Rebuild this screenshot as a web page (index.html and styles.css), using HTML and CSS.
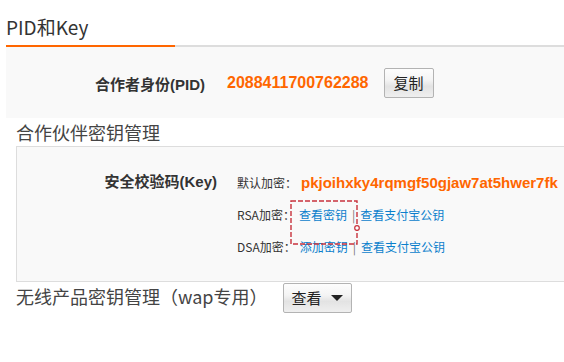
FILE: index.html
```html
<!DOCTYPE html>
<html lang="zh-CN">

<head>
    <meta charset="UTF-8">
    <meta name="viewport" content="width=device-width, initial-scale=1.0">
    <title>PID和Key</title>
    <link rel="stylesheet" href="styles.css">
</head>

<body>
    <div class="page">
        <div class="tabs">
            <div class="tab">PID和Key</div>
        </div>

        <div class="panel pid-panel">
            <span class="label">合作者身份(PID)</span>
            <span class="pid">2088411700762288</span>
            <button class="btn copy-btn">复制</button>
        </div>

        <div class="section">
            <h3 class="section-title">合作伙伴密钥管理</h3>
            <div class="panel key-panel">
                <div class="label">安全校验码(Key)</div>
                <div class="key-rows">
                    <div class="key-row">
                        <span class="type">默认加密：</span>
                        <span class="key">pkjoihxky4rqmgf50gjaw7at5hwer7fk</span>
                    </div>
                    <div class="key-row">
                        <span class="type">RSA加密：</span>
                        <a href="#">查看密钥</a><span class="sep">|</span><a href="#">查看支付宝公钥</a>
                    </div>
                    <div class="key-row">
                        <span class="type">DSA加密：</span>
                        <a href="#">添加密钥</a><span class="sep">|</span><a href="#">查看支付宝公钥</a>
                    </div>
                </div>
                <!-- 选中框 -->
                <svg class="marquee" width="70" height="46" viewBox="0 0 70 46">
                    <rect x="1" y="1" width="66" height="43" fill="none" stroke="#c8323c" stroke-width="1.4" stroke-dasharray="5 2"/>
                    <circle cx="67" cy="28" r="2.3" fill="#fff" stroke="#c8323c" stroke-width="1.2"/>
                </svg>
            </div>

            <div class="wap-row">
                <h3 class="section-title">无线产品密钥管理（wap专用）</h3>
                <button class="btn drop-btn">查看<i class="caret"></i></button>
            </div>
        </div>
    </div>
</body>

</html>
```

FILE: styles.css
```css
html,
body {
    overflow: hidden;
}

body {
    margin: 0;
    background: #fff;
    color: #333;
    font-family: "Noto Sans CJK SC", "Liberation Sans", sans-serif;
}

.page {
    padding-left: 6px;
}

.tabs {
    display: flex;
    border-bottom: 2px solid #ddd;
}

.tab {
    width: 169px;
    padding: 14px 0 5px;
    margin-bottom: -2px;
    border-bottom: 2px solid #f60;
    font-size: 19px;
    line-height: 26px;
    color: #333;
}

.panel {
    background-color: #f9f9f9;
}

.label {
    flex-shrink: 0;
    width: 200px;
    text-align: right;
    font-family: "Liberation Sans", "Noto Sans CJK SC", sans-serif;
    font-weight: bold;
    font-size: 15px;
    color: #333;
}

.pid-panel {
    display: flex;
    align-items: center;
    padding: 21px 0 20px;
}

.pid-panel .label {
    width: 199px;
}

.pid {
    margin-left: 22px;
    color: #f60;
    font: bold 16px "Liberation Sans", sans-serif;
}

.btn {
    height: 30px;
    border: 1px solid #b3b3b3;
    border-radius: 2px;
    background: linear-gradient(to bottom, #fdfdfd 0%, #f4f4f4 40%, #e3e3e3 62%, #efefef 100%);
    font-family: "Noto Sans CJK SC", sans-serif;
    font-size: 15px;
    line-height: 28px;
    color: #222;
    cursor: pointer;
}

.copy-btn {
    width: 50px;
    margin-left: 15px;
    padding: 0;
}

.section {
    margin-left: 10px;
}

.section-title {
    margin: 0;
    height: 28px;
    font-weight: normal;
    font-size: 18px;
    line-height: 28px;
    color: #444;
}

.key-panel {
    position: relative;
    display: flex;
    align-items: flex-start;
    padding: 19px 0;
    border: 1px solid #ddd;
    border-right: none;
}

.key-panel .label {
    margin-right: 20px;
    line-height: 32px;
}

.key-row {
    display: flex;
    align-items: center;
    height: 32px;
    font-size: 12px;
    white-space: nowrap;
}

.type {
    margin-right: 4px;
    color: #333;
}

.key {
    color: #f60;
    font: bold 15px "Liberation Sans", sans-serif;
}

.key-row a {
    color: #0b7fcc;
    text-decoration: none;
}

.sep {
    margin: 0 5px;
    color: #777;
}

.marquee {
    position: absolute;
    left: 273px;
    top: 53px;
}

.wap-row {
    display: flex;
    align-items: flex-start;
    margin-top: 1px;
}

.wap-row .section-title {
    height: auto;
    line-height: 26px;
    margin-right: 15px;
}

.drop-btn {
    display: flex;
    align-items: center;
    gap: 9px;
    width: 69px;
    padding: 0 0 0 8px;
}

.caret {
    width: 0;
    height: 0;
    border-top: 6px solid #222;
    border-left: 6px solid transparent;
    border-right: 6px solid transparent;
}
```
